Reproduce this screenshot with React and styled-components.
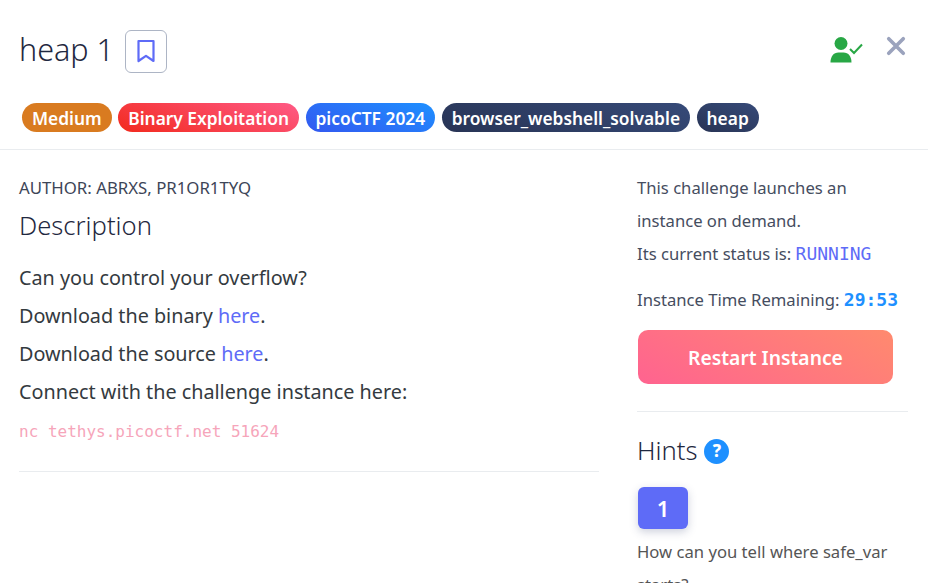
import styled, { createGlobalStyle } from "styled-components"

const Global = createGlobalStyle`
    html, body {
        margin: 0;
        padding: 0;
        height: 100%;
        overflow: hidden;
        background: #fff;
    }
    body {
        font-family: "Noto Sans", "Open Sans", sans-serif;
    }
`

const Modal = styled.div`
    width: 928px;
    height: 583px;
    overflow: hidden;
    background: #fff;
`

const Header = styled.header`
    height: 150px;
    box-sizing: border-box;
    padding: 30px 22px 0 19px;
    border-bottom: 1px solid #e9ecef;
`

const TitleRow = styled.div`
    display: flex;
    align-items: center;
    height: 42px;
`

const Title = styled.h5`
    margin: -5px 11px 0 0;
    font-size: 30.5px;
    line-height: 42px;
    font-weight: 300;
    color: #1f2840;
`

const BookmarkButton = styled.button`
    width: 42px;
    height: 43px;
    padding: 0;
    display: flex;
    align-items: center;
    justify-content: center;
    background: #fff;
    border: 1px solid #adb5c5;
    border-radius: 6px;
    color: #5e6bf7;
`

const Actions = styled.div`
    margin: 6px 0 0 auto;
    align-self: flex-start;
    display: flex;
    align-items: flex-start;
    gap: 23px;
`

const Badges = styled.div`
    display: flex;
    gap: 6.5px;
    margin: 31px 0 0 3px;
`

const Badge = styled.span`
    height: 29px;
    box-sizing: border-box;
    padding: 0 10px;
    display: flex;
    align-items: center;
    border-radius: 15px;
    font-size: 17.35px;
    font-weight: 600;
    color: #fff;
    background: ${(p) => p.$bg};
`

const Body = styled.div`
    display: flex;
    padding: 0 20px 0 19px;
`

const Main = styled.section`
    width: 580px;
    margin-right: 38px;
    padding-top: 26px;
`

const Author = styled.div`
    font-size: 16.8px;
    line-height: 24px;
    color: #3d4557;
`

const Heading = styled.h4`
    margin: 9px 0 17px;
    font-size: 25.6px;
    line-height: 33px;
    font-weight: 300;
    color: #1f2840;
`

const Line = styled.p`
    margin: 0;
    font-size: 19.8px;
    line-height: 38px;
    color: #343a40;
`

const Link = styled.a`
    color: #5e6bf7;
    text-decoration: none;
`

const Command = styled.code`
    display: block;
    margin-top: 9px;
    font-family: "DejaVu Sans Mono", monospace;
    font-size: 16px;
    line-height: 24px;
    color: #f6a5ba;
`

const Divider = styled.hr`
    margin: ${(p) => p.$margin};
    border: 0;
    border-top: 1px solid #e9ecef;
`

const Side = styled.aside`
    width: 271px;
    padding-top: 21px;
`

const SideText = styled.p`
    margin: ${(p) => p.$top || 0}px 0 0;
    font-size: 16.65px;
    line-height: 33px;
    color: #454d60;
`

const Status = styled.span`
    font-family: "DejaVu Sans Mono", monospace;
    font-size: 18px;
    color: ${(p) => p.$color};
    font-weight: ${(p) => p.$weight || 400};
`

const RestartButton = styled.button`
    display: block;
    width: 255px;
    height: 54px;
    margin: 14px 0 0 1px;
    border: 0;
    border-radius: 10px;
    font-family: inherit;
    font-size: 19.3px;
    font-weight: 600;
    color: #fff;
    background: linear-gradient(30deg, #ff6390, #ff8a6e);
`

const HintsTitle = styled.h4`
    display: flex;
    align-items: center;
    gap: 7px;
    margin: 20px 0 17px;
    font-size: 25.6px;
    line-height: 38px;
    font-weight: 300;
    color: #1f2840;
`

const HelpDot = styled.span`
    width: 25px;
    height: 25px;
    display: flex;
    align-items: center;
    justify-content: center;
    border-radius: 50%;
    background: #1e90ff;
    color: #fff;
    font-size: 17px;
    font-weight: 800;
`

const HintButton = styled.button`
    display: block;
    width: 50px;
    height: 42px;
    margin-left: 1px;
    padding: 0;
    border: 0;
    border-radius: 6px;
    font-family: inherit;
    font-size: 22px;
    font-weight: 600;
    color: #fff;
    background: #5e6bf7;
    box-shadow: 0 3px 8px rgba(60, 70, 120, 0.25);
`

const HintText = styled.p`
    margin: 6px 0 0;
    font-size: 16.65px;
    line-height: 33px;
    color: #555;
`

const BookmarkIcon = () => (
    <svg width="20" height="24" viewBox="0 0 20 24" fill="none" stroke="currentColor" strokeWidth="2.2" strokeLinejoin="round">
        <path d="M2.5 2h15v20L10 16.8 2.5 22z" />
    </svg>
)

const UserCheckIcon = () => (
    <svg width="33" height="27" viewBox="0 0 33 27" fill="#28a745">
        <circle cx="11" cy="7.5" r="6.5" />
        <path d="M0.5 26.5c0-6 3-10 8-10h5c5 0 8 4 8 10z" />
        <path d="M20 13l4 4L32 8.5" fill="none" stroke="#28a745" strokeWidth="2" />
    </svg>
)

const CloseIcon = () => (
    <svg width="20" height="20" viewBox="0 0 22 22" fill="none" stroke="#9ba3bd" strokeWidth="4" strokeLinecap="round">
        <path d="M3 3l16 16M19 3L3 19" />
    </svg>
)

const tags = [
    { label: "Medium", bg: "#d97b20" },
    { label: "Binary Exploitation", bg: "linear-gradient(20deg, #f22a1e, #ff5a86)" },
    { label: "picoCTF 2024", bg: "linear-gradient(20deg, #3358f0, #1e90ff)" },
    { label: "browser_webshell_solvable", bg: "linear-gradient(20deg, #283455, #364a78)" },
    { label: "heap", bg: "linear-gradient(20deg, #283455, #364a78)" },
]

const App = () => {
    return (
        <Modal>
            <Global />
            <Header>
                <TitleRow>
                    <Title>heap 1</Title>
                    <BookmarkButton aria-label="Bookmark"><BookmarkIcon /></BookmarkButton>
                    <Actions>
                        <UserCheckIcon />
                        <CloseIcon />
                    </Actions>
                </TitleRow>
                <Badges>
                    {tags.map((t) => (
                        <Badge key={t.label} $bg={t.bg}>{t.label}</Badge>
                    ))}
                </Badges>
            </Header>
            <Body>
                <Main>
                    <Author>AUTHOR: ABRXS, PR1OR1TYQ</Author>
                    <Heading>Description</Heading>
                    <Line>Can you control your overflow?</Line>
                    <Line>Download the binary <Link href="#">here</Link>.</Line>
                    <Line>Download the source <Link href="#">here</Link>.</Line>
                    <Line>Connect with the challenge instance here:</Line>
                    <Command>nc tethys.picoctf.net 51624</Command>
                    <Divider $margin="27px 0 0" />
                </Main>
                <Side>
                    <SideText>This challenge launches an instance on demand.</SideText>
                    <SideText>Its current status is: <Status $color="#5e6bf7">RUNNING</Status></SideText>
                    <SideText $top={13}>Instance Time Remaining: <Status $color="#1e90ff" $weight={600}>29:53</Status></SideText>
                    <RestartButton>Restart Instance</RestartButton>
                    <Divider $margin="27px 0 0" />
                    <HintsTitle>Hints <HelpDot>?</HelpDot></HintsTitle>
                    <HintButton>1</HintButton>
                    <HintText>How can you tell where safe_var starts?</HintText>
                </Side>
            </Body>
        </Modal>
    )
}

export default App
